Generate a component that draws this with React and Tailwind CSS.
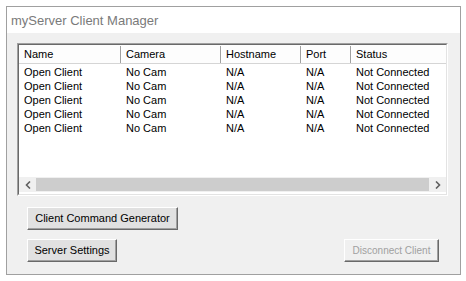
import React from "react";

const cols = [
  { label: "Name", w: "w-[102px]" },
  { label: "Camera", w: "w-[100px]" },
  { label: "Hostname", w: "w-[80px]" },
  { label: "Port", w: "w-[50px]" },
  { label: "Status", w: "w-[110px]" },
];

const rows = Array.from({ length: 5 }, () => ["Open Client", "No Cam", "N/A", "N/A", "Not Connected"]);

const WinButton = ({ children, className = "", disabled = false }) => (
  <button
    disabled={disabled}
    className={`h-[23px] whitespace-nowrap border border-t-white border-l-white border-r-[#696969] border-b-[#696969] shadow-[inset_-1px_-1px_0_#a0a0a0] leading-none px-[6px] ${
      disabled ? "text-[#a0a0a0] bg-[#f0f0f0] text-[10px]" : "text-black bg-[#e1e1e1] text-[11px]"
    } ${className}`}
  >
    {children}
  </button>
);

export default function App() {
  return (
    <div className="w-[466px] h-[281px] bg-white pt-[6px] pl-[6px] font-['Liberation_Sans',Arial,sans-serif]">
      <div className="w-[455px] h-[269px] border border-[#a0a0a0] flex flex-col">
        {/* title */}
        <div className="h-[26px] bg-white flex items-center pl-[4px] pt-[1px] text-[13px] text-[#7a7a7a]">
          myServer Client Manager
        </div>

        <div className="flex-1 bg-[#f0f0f0] pt-[10px] pl-[10px] flex flex-col">
          {/* list view */}
          <div className="w-[431px] h-[153px] border border-t-[#a0a0a0] border-l-[#a0a0a0] border-r-white border-b-white">
            <div className="h-full border border-t-[#696969] border-l-[#696969] border-r-[#e3e3e3] border-b-[#e3e3e3] bg-white flex flex-col">
              <div className="h-[19px] flex overflow-hidden border-b border-[#d5d5d5] bg-[#fdfdfd] text-[11px] pt-[1px]">
                {cols.map((c) => (
                  <div
                    key={c.label}
                    className={`${c.w} shrink-0 h-full border-r border-[#a0a0a0] shadow-[inset_1px_0_0_#fff] pl-[5px] flex items-center`}
                  >
                    {c.label}
                  </div>
                ))}
              </div>
              <div className="flex-1 pt-[1px] text-[11px]">
                {rows.map((r, i) => (
                  <div key={i} className="h-[14px] flex items-center leading-none">
                    {r.map((cell, j) => (
                      <div key={j} className={`${cols[j].w} shrink-0 pl-[5px] whitespace-nowrap`}>
                        {cell}
                      </div>
                    ))}
                  </div>
                ))}
              </div>
              {/* horizontal scrollbar */}
              <div className="h-[15px] bg-[#f0f0f0] flex items-center mb-[2px]">
                <div className="w-[17px] h-full flex items-center justify-center">
                  <svg width="6" height="8" viewBox="0 0 6 8">
                    <path d="M5 0.5 L1.5 4 L5 7.5" fill="none" stroke="#606060" strokeWidth="1.6" />
                  </svg>
                </div>
                <div className="flex-1 h-[13px] bg-[#cdcdcd]" />
                <div className="w-[17px] h-full flex items-center justify-center">
                  <svg width="6" height="8" viewBox="0 0 6 8">
                    <path d="M1 0.5 L4.5 4 L1 7.5" fill="none" stroke="#606060" strokeWidth="1.6" />
                  </svg>
                </div>
              </div>
            </div>
          </div>

          <div className="pl-[10px] pt-[9px] flex flex-col gap-[9px] w-[431px]">
            <div>
              <WinButton className="w-[151px]">Client Command Generator</WinButton>
            </div>
            <div className="flex justify-between pr-[9px]">
              <WinButton className="w-[90px]">Server Settings</WinButton>
              <WinButton className="w-[95px]" disabled>
                Disconnect Client
              </WinButton>
            </div>
          </div>
        </div>
      </div>
    </div>
  );
}
